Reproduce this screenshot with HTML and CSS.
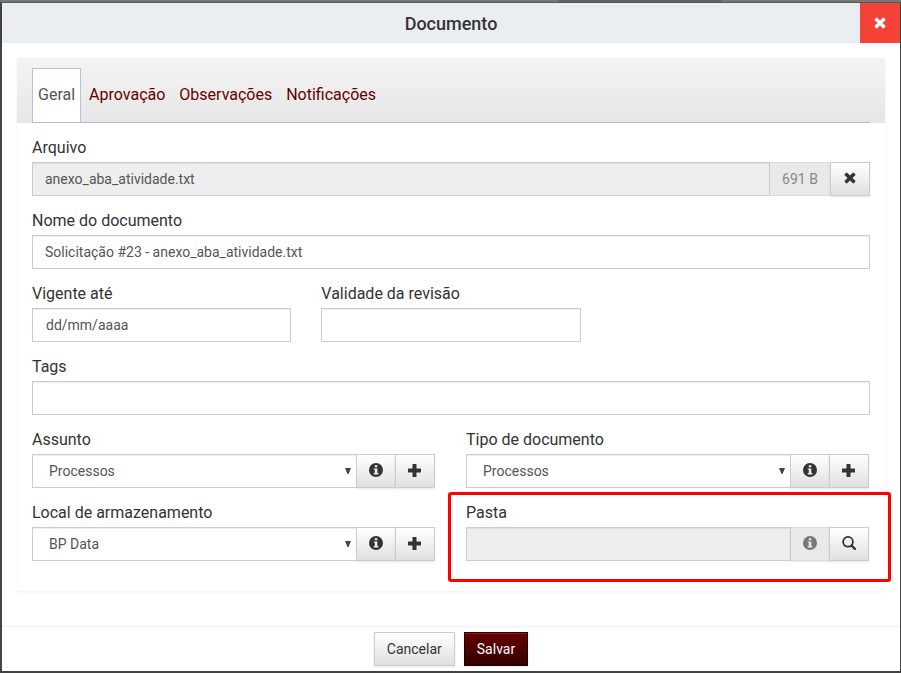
FILE: index.html
```html
<!DOCTYPE html>
<html lang="pt-BR">
<head>
<meta charset="utf-8">
<title>Documento</title>
<link rel="stylesheet" href="styles.css">
</head>
<body>
<svg class="sprite" aria-hidden="true">
  <symbol id="i-times" viewBox="0 0 14 14"><path d="M3.700.8 7 4.100 10.300.8q.5-.4 1 0l1.900 1.900q.4.500 0 1L9.900 7l3.300 3.300q.4.500 0 1l-1.900 1.900q-.5.400-1 0L7 9.900l-3.300 3.300q-.5.400-1 0L.8 11.300q-.4-.5 0-1L4.100 7 .8 3.700q-.4-.5 0-1L2.700.8q.5-.4 1 0z"/></symbol>
  <symbol id="i-plus" viewBox="0 0 14 14"><path d="M5 1h3q.5 0 .5.500V5.500h4q.5 0 .5.500v3q0 .5-.5.500h-4v4q0 .5-.5.500H5q-.5 0-.5-.5v-4h-4Q0 9.500 0 9V6q0-.5.500-.5h4v-4Q4.500 1 5 1z"/></symbol>
  <symbol id="i-info" viewBox="0 0 14 14"><path fill-rule="evenodd" d="M7 0a7 7 0 1 1 0 14A7 7 0 0 1 7 0zM5.800 2.200v2.100h2.500V2.200zM4.700 5.400v1.200h1.100v3.500H4.700v1.500h4.700v-1.500H8.300V5.400z"/></symbol>
  <symbol id="i-search" viewBox="0 0 14 14"><circle cx="6" cy="5.800" r="4.900" fill="none" stroke="currentColor" stroke-width="1.800"/><path d="m9.600 9.600 3.300 3.300" fill="none" stroke="currentColor" stroke-width="2.200" stroke-linecap="round"/></symbol>
  <symbol id="i-caret" viewBox="0 0 6 6"><path d="M0 0h6L3.500 6h-1z"/></symbol>
</svg>
<main class="modal">
  <header class="modal-header">
    <h1 class="title">Documento</h1>
    <button class="close" type="button" aria-label="Fechar"><svg class="icon icon-small"><use href="#i-times"/></svg></button>
  </header>
  <div class="modal-body">
    <div class="panel">
      <div class="panel-head">
        <nav class="tabs">
          <a class="tab active" href="#geral">Geral</a>
          <a class="tab" href="#aprovacao">Aprovação</a>
          <a class="tab" href="#observacoes">Observações</a>
          <a class="tab" href="#notificacoes">Notificações</a>
        </nav>
      </div>
      <form class="form" id="geral">
        <div class="field">
          <label for="arquivo">Arquivo</label>
          <div class="group">
            <input class="control" id="arquivo" type="text" value="anexo_aba_atividade.txt" disabled>
            <span class="addon">691 B</span>
            <button class="btn btn-icon wide" type="button" aria-label="Remover"><svg class="icon icon-small"><use href="#i-times"/></svg></button>
          </div>
        </div>
        <div class="field">
          <label for="nome">Nome do documento</label>
          <input class="control" id="nome" type="text" value="Solicitação #23 - anexo_aba_atividade.txt">
        </div>
        <div class="row thirds">
          <div class="field">
            <label for="vigente">Vigente até</label>
            <input class="control date" id="vigente" type="text" placeholder="dd/mm/aaaa">
          </div>
          <div class="field">
            <label for="validade">Validade da revisão</label>
            <input class="control" id="validade" type="text">
          </div>
        </div>
        <div class="field">
          <label for="tags">Tags</label>
          <input class="control" id="tags" type="text">
        </div>
        <div class="row halves">
          <div class="field">
            <label for="assunto">Assunto</label>
            <div class="group">
              <div class="select"><select class="control" id="assunto"><option>Processos</option></select><svg class="caret"><use href="#i-caret"/></svg></div>
              <button class="btn btn-icon" type="button" aria-label="Informações"><svg class="icon"><use href="#i-info"/></svg></button>
              <button class="btn btn-icon" type="button" aria-label="Adicionar"><svg class="icon"><use href="#i-plus"/></svg></button>
            </div>
          </div>
          <div class="field">
            <label for="tipo">Tipo de documento</label>
            <div class="group">
              <div class="select"><select class="control" id="tipo"><option>Processos</option></select><svg class="caret"><use href="#i-caret"/></svg></div>
              <button class="btn btn-icon" type="button" aria-label="Informações"><svg class="icon"><use href="#i-info"/></svg></button>
              <button class="btn btn-icon" type="button" aria-label="Adicionar"><svg class="icon"><use href="#i-plus"/></svg></button>
            </div>
          </div>
          <div class="field">
            <label for="local">Local de armazenamento</label>
            <div class="group">
              <div class="select"><select class="control" id="local"><option>BP Data</option></select><svg class="caret"><use href="#i-caret"/></svg></div>
              <button class="btn btn-icon" type="button" aria-label="Informações"><svg class="icon"><use href="#i-info"/></svg></button>
              <button class="btn btn-icon" type="button" aria-label="Adicionar"><svg class="icon"><use href="#i-plus"/></svg></button>
            </div>
          </div>
          <div class="field highlighted">
            <label for="pasta">Pasta</label>
            <div class="group">
              <input class="control" id="pasta" type="text" disabled>
              <button class="btn btn-icon" type="button" aria-label="Informações" disabled><svg class="icon"><use href="#i-info"/></svg></button>
              <button class="btn btn-icon" type="button" aria-label="Pesquisar"><svg class="icon"><use href="#i-search"/></svg></button>
            </div>
          </div>
        </div>
      </form>
    </div>
  </div>
  <footer class="modal-footer">
    <button class="btn" type="button">Cancelar</button>
    <button class="btn btn-primary" type="submit" form="geral">Salvar</button>
  </footer>
</main>
</body>
</html>
```
FILE: styles.css
```css
* { box-sizing: border-box; }

body {
  margin: 0;
  min-height: 100vh;
  padding: 3px 1px 2px 2px;
  display: flex;
  background:
    linear-gradient(#555, #555) 0 2px / 100% 1px no-repeat,
    linear-gradient(90deg, #777 62%, #626262 62%, #626262 80%, #777 80%) 0 0 / 100% 2px no-repeat,
    #434343;
  font-family: Roboto, "Liberation Sans", sans-serif;
  font-size: 14px;
  color: #333;
}

button, input, select { font: inherit; }

.sprite { position: absolute; width: 0; height: 0; }

.modal {
  flex: 1;
  min-width: 0;
  display: flex;
  flex-direction: column;
  background: #fff;
}

.modal-header {
  display: flex;
  align-items: stretch;
  height: 40px;
  background: #eaeef1;
}
.title {
  flex: 1;
  margin: 0;
  padding-left: 40px;
  font-size: 18px;
  line-height: 42px;
  font-weight: 500;
  text-align: center;
}
.close {
  display: flex;
  align-items: center;
  justify-content: center;
  width: 40px;
  padding: 0;
  border: 0;
  background: #f44336;
  color: #fff;
}

.icon { display: block; width: 14px; height: 14px; fill: currentColor; }
.icon-small { width: 12px; height: 12px; }

.modal-body { flex: 1; padding: 15px 15px 35px; }

.panel { box-shadow: 0 1px 3px rgba(0, 0, 0, .06); }
.panel-head {
  padding: 10px 15px 0;
  background: linear-gradient(#f4f4f4, #e6e6e6);
}
.tabs { display: flex; gap: 2px; border-bottom: 1px solid #b0c0d4; }
.tab {
  padding: 0 5px 2px;
  border: 1px solid transparent;
  border-bottom: 0;
  font-size: 16px;
  line-height: 51px;
  color: #660000;
  text-decoration: none;
}
.tab.active { border-color: #b0c4da; background: #fff; color: #555; }

.form { padding: 15px; }
.field { min-width: 0; margin-bottom: 15px; }
.field label {
  display: block;
  margin-bottom: 5px;
  font-size: 16px;
  line-height: 19px;
}

.row { display: grid; column-gap: 30px; }
.thirds { grid-template-columns: repeat(3, minmax(0, 1fr)); }
.halves { grid-template-columns: repeat(2, minmax(0, 1fr)); }
.halves .group { padding-right: 1px; }

.control {
  display: block;
  width: 100%;
  height: 34px;
  padding: 6px 12px;
  border: 1px solid #ccc;
  border-radius: 0;
  background: #fff;
  box-shadow: inset 0 1px 1px rgba(0, 0, 0, .075);
  color: #555;
}
.control:disabled { background: #eee; color: #555; opacity: 1; }
.control::placeholder { color: #555; opacity: 1; }
.date { padding-left: 13px; }

.group { display: flex; }
.group > .control, .select { flex: 1; min-width: 0; width: auto; }
.select { position: relative; }
.select .control { appearance: none; padding-left: 16px; }
.caret {
  position: absolute;
  right: 6px;
  top: 14px;
  width: 6px;
  height: 6px;
  fill: #444;
  pointer-events: none;
}

.addon {
  width: 60px;
  border: 1px solid #ddd;
  border-width: 1px 0;
  background: #e9e9e9;
  color: #888;
  line-height: 32px;
  text-align: center;
}

.btn {
  height: 34px;
  padding: 0 12px;
  border: 1px solid #ccc;
  border-radius: 0;
  background: linear-gradient(#fff, #e0e0e0);
  box-shadow: 0 1px 2px rgba(0, 0, 0, .1);
  color: #333;
}
.btn-icon {
  display: flex;
  align-items: center;
  justify-content: center;
  width: 40px;
  padding: 0 0 2px;
  margin-left: -1px;
}
.btn-icon.wide { margin-left: 0; }
.btn-icon:disabled { border-color: #ddd; border-left-color: #ccc; background: #e9e9e9; color: #777; }
.btn-primary {
  border-color: #200000;
  background: linear-gradient(#660000, #330000);
  box-shadow: inset 0 1px 0 #7d2020, 0 1px 2px rgba(0, 0, 0, .1);
  color: #fff;
}

.highlighted { position: relative; }
.highlighted::after {
  content: "";
  position: absolute;
  inset: -11px -21px -21px -18px;
  border: 3px solid #f00;
  border-radius: 3px;
  pointer-events: none;
}

.modal-footer {
  display: flex;
  justify-content: center;
  gap: 9px;
  padding: 5px;
  border-top: 1px solid #f0f0f0;
}
```
